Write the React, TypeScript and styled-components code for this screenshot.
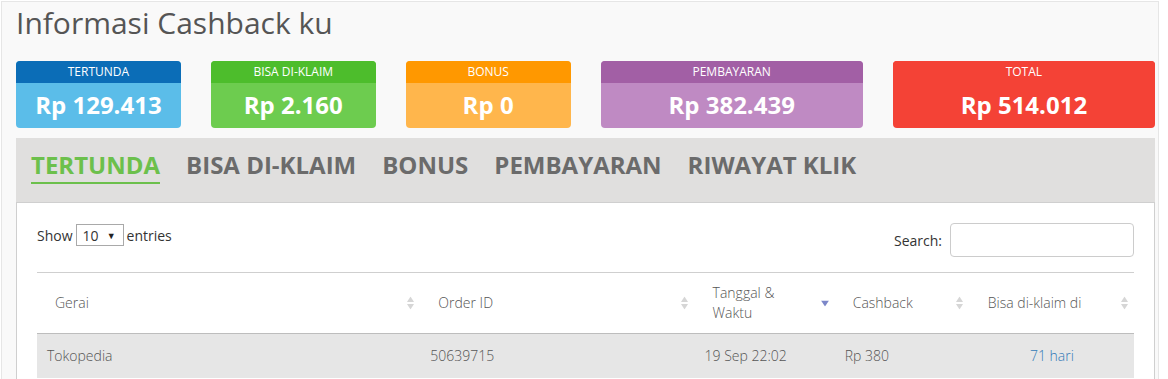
import React from 'react'
import styled, { createGlobalStyle } from 'styled-components'

const GlobalStyle = createGlobalStyle`
  body {
    margin: 0;
    background: #ffffff;
    font-family: 'Open Sans', 'Noto Sans', sans-serif;
    color: #555;
  }
`

type Summary = { label: string; value: string; head: string; body: string }

const summaries: Summary[] = [
  { label: 'TERTUNDA', value: 'Rp 129.413', head: '#0b6db7', body: '#5bbde9' },
  { label: 'BISA DI-KLAIM', value: 'Rp 2.160', head: '#4dbd2c', body: '#6dcc4f' },
  { label: 'BONUS', value: 'Rp 0', head: '#ff9800', body: '#ffb64c' },
  { label: 'PEMBAYARAN', value: 'Rp 382.439', head: '#a25fa5', body: '#bf8ac3' },
  { label: 'TOTAL', value: 'Rp 514.012', head: '#f44236', body: '#f44236' },
]

const tabs = ['TERTUNDA', 'BISA DI-KLAIM', 'BONUS', 'PEMBAYARAN', 'RIWAYAT KLIK']

const columns = [
  { title: 'Gerai', width: 383, sort: 'both' },
  { title: 'Order ID', width: 274, sort: 'both' },
  { title: 'Tanggal & Waktu', width: 140, sort: 'desc' },
  { title: 'Cashback', width: 135, sort: 'both' },
  { title: 'Bisa di-klaim di', width: 164, sort: 'both' },
]

const SortIcon = ({ mode }: { mode: string }) =>
  mode === 'desc' ? (
    <svg width="8" height="6" viewBox="0 0 8 6">
      <path d="M0 0 L8 0 L4 6 Z" fill="#7c87c9" />
    </svg>
  ) : (
    <svg width="7" height="13" viewBox="0 0 7 13">
      <path d="M3.5 0 L7 5.5 L0 5.5 Z" fill="#d6d6d6" />
      <path d="M0 7.5 L7 7.5 L3.5 13 Z" fill="#d6d6d6" />
    </svg>
  )

export const App = () => {
  return (
    <Frame>
      <GlobalStyle />
      <Title>Informasi Cashback ku</Title>
      <Cards>
        {summaries.map((s) => (
          <Card key={s.label} bg={s.body}>
            <CardHead bg={s.head}>{s.label}</CardHead>
            <CardValue>{s.value}</CardValue>
          </Card>
        ))}
      </Cards>
      <Panel>
        <TabBar>
          {tabs.map((t, i) => (
            <Tab key={t} active={i === 0}>
              {t}
            </Tab>
          ))}
        </TabBar>
        <Content>
          <Controls>
            <Length>
              Show
              <FakeSelect>
                <span>10</span>
                <Caret>▼</Caret>
              </FakeSelect>
              entries
            </Length>
            <SearchBox>
              Search:
              <SearchInput type="text" />
            </SearchBox>
          </Controls>
          <Table>
            <colgroup>
              {columns.map((c) => (
                <col key={c.title} style={{ width: c.width }} />
              ))}
            </colgroup>
            <thead>
              <tr>
                {columns.map((c) => (
                  <Th key={c.title}>
                    <ThLabel>{c.title}</ThLabel>
                    <SortSlot>
                      <SortIcon mode={c.sort} />
                    </SortSlot>
                  </Th>
                ))}
              </tr>
            </thead>
            <tbody>
              <Row>
                <Td>Tokopedia</Td>
                <Td>50639715</Td>
                <Td>19 Sep 22:02</Td>
                <Td>Rp 380</Td>
                <Td center>
                  <DayLink>71 hari</DayLink>
                </Td>
              </Row>
            </tbody>
          </Table>
        </Content>
      </Panel>
    </Frame>
  )
}

const Frame = styled.div`
  margin: 1px 9px 0 1px;
  border: 1px solid #e6e6e6;
  border-bottom: none;
  background: #f9f9f9;
  padding: 0 3px 0 14px;
  height: 378px;
  overflow: hidden;
  box-sizing: border-box;
`

const Title = styled.h1`
  margin: 0;
  padding-top: 4px;
  font-size: 30px;
  line-height: 33px;
  font-weight: 400;
  color: #555;
`

const Cards = styled.div`
  display: grid;
  grid-template-columns: 164.7fr 164.7fr 164.7fr 262fr 262fr;
  column-gap: 30px;
  margin-top: 22px;
`

const Card = styled.div<{ bg: string }>`
  background: ${(p) => p.bg};
  border-radius: 4px;
  overflow: hidden;
  height: 67px;
  color: #fff;
  text-align: center;
`

const CardHead = styled.div<{ bg: string }>`
  background: ${(p) => p.bg};
  height: 22px;
  line-height: 22px;
  font-size: 12px;
`

const CardValue = styled.div`
  font-size: 24px;
  font-weight: 700;
  line-height: 43px;
`

const Panel = styled.div`
  margin-top: 10px;
  background: #e0dfde;
`

const TabBar = styled.div`
  display: flex;
  gap: 26px;
  padding: 0 15px;
  height: 64px;
  align-items: flex-start;
`

const Tab = styled.div<{ active?: boolean }>`
  margin-top: 10px;
  font-size: 24px;
  font-weight: 700;
  line-height: 33px;
  padding-bottom: 1px;
  color: ${(p) => (p.active ? '#6cc04c' : '#6b6b6b')};
  border-bottom: 2px solid ${(p) => (p.active ? '#6cc04c' : 'transparent')};
`

const Content = styled.div`
  background: #fff;
  border: 1px solid #cfcfcf;
  padding: 20px 20px 0 20px;
  height: 200px;
`

const Controls = styled.div`
  display: flex;
  justify-content: space-between;
  align-items: flex-start;
  height: 34px;
  font-size: 14px;
  color: #333;
`

const Length = styled.div`
  display: flex;
  align-items: center;
  gap: 3px;
  height: 22px;
  margin-top: 1px;
`

const FakeSelect = styled.div`
  display: flex;
  align-items: center;
  justify-content: space-between;
  width: 48px;
  height: 22px;
  box-sizing: border-box;
  border: 1px solid #a9a9a9;
  padding: 0 7px 0 6px;
  background: #fff;
  font-size: 14px;
`

const Caret = styled.span`
  font-size: 9px;
  color: #222;
`

const SearchBox = styled.label`
  display: flex;
  align-items: center;
  gap: 8px;
  height: 34px;
`

const SearchInput = styled.input`
  width: 184px;
  height: 34px;
  box-sizing: border-box;
  border: 1px solid #ccc;
  border-radius: 4px;
  outline: none;
  margin: 0;
`

const Table = styled.table`
  width: 100%;
  margin-top: 15px;
  table-layout: fixed;
  border-collapse: collapse;
  border-top: 1px solid #cfcfcf;
  font-size: 14px;
`

const Th = styled.th`
  position: relative;
  text-align: left;
  font-weight: 300;
  color: #555;
  padding: 10px 24px 10px 18px;
  line-height: 20px;
  height: 40px;
  border-bottom: 1px solid #bdbdbd;
`

const ThLabel = styled.span`
  display: block;
`

const SortSlot = styled.span`
  position: absolute;
  right: 6px;
  top: 50%;
  transform: translateY(-50%);
  display: flex;
  align-items: center;
  justify-content: center;
  width: 8px;
  height: 13px;
`

const Row = styled.tr`
  background: #e6e6e6;
`

const Td = styled.td<{ center?: boolean }>`
  padding: 12px 10px;
  line-height: 20px;
  font-weight: 300;
  color: #555;
  text-align: ${(p) => (p.center ? 'center' : 'left')};
`

const DayLink = styled.a`
  color: #337ab7;
  text-decoration: none;
`

export default App
